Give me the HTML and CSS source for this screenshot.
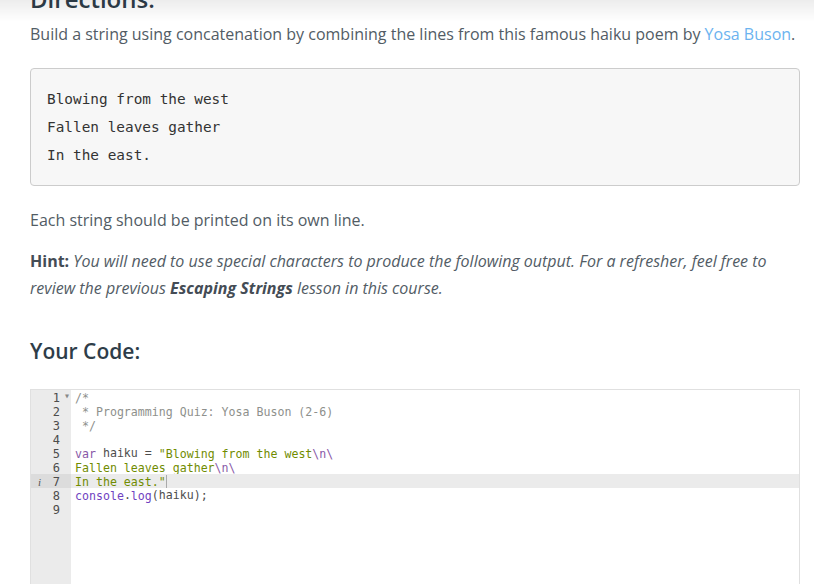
FILE: index.html
```html
<!DOCTYPE html>
<html>
<head>
<meta charset="utf-8">
<link rel="stylesheet" href="styles.css">
</head>
<body>
<div class="topshade"></div>
<main class="lesson">
  <h2 class="directions">Directions:</h2>
  <p class="para">Build a string using concatenation by combining the lines from this famous haiku poem by <a class="link" href="#">Yosa Buson</a>.</p>
  <pre class="poem">Blowing from the west
Fallen leaves gather
In the east.</pre>
  <p class="para each">Each string should be printed on its own line.</p>
  <p class="para hint"><strong>Hint:</strong> <em>You will need to use special characters to produce the following output. For a refresher, feel free to review the previous <strong>Escaping Strings</strong> lesson in this course.</em></p>
  <h3 class="yourcode">Your Code:</h3>
  <div class="editor">
    <div class="gutter">
      <div class="gl"><span class="num">1</span><span class="fold">▾</span></div>
      <div class="gl"><span class="num">2</span></div>
      <div class="gl"><span class="num">3</span></div>
      <div class="gl"><span class="num">4</span></div>
      <div class="gl"><span class="num">5</span></div>
      <div class="gl"><span class="num">6</span></div>
      <div class="gl active"><span class="info">i</span><span class="num">7</span></div>
      <div class="gl"><span class="num">8</span></div>
      <div class="gl"><span class="num">9</span></div>
    </div>
    <div class="code">
      <div class="cl"><span class="c">/*</span></div>
      <div class="cl"><span class="c"> * Programming Quiz: Yosa Buson (2-6)</span></div>
      <div class="cl"><span class="c"> */</span></div>
      <div class="cl"> </div>
      <div class="cl"><span class="k">var</span> haiku = <span class="s">"Blowing from the west</span><span class="e">\n\</span></div>
      <div class="cl"><span class="s">Fallen leaves gather</span><span class="e">\n\</span></div>
      <div class="cl active"><span class="s">In the east."</span><span class="cursor"></span></div>
      <div class="cl"><span class="f">console</span>.<span class="f">log</span>(haiku);</div>
      <div class="cl"> </div>
    </div>
  </div>
</main>
</body>
</html>
```

FILE: styles.css
```css
html, body {
  margin: 0;
  padding: 0;
  background: #ffffff;
}
body {
  font-family: "Open Sans", "Liberation Sans", sans-serif;
  color: #525c65;
  overflow: hidden;
}
.topshade {
  position: fixed;
  left: 0;
  top: 0;
  right: 0;
  height: 22px;
  background: linear-gradient(to bottom, rgba(0,0,0,0.07), rgba(0,0,0,0));
  pointer-events: none;
}
.lesson {
  margin: 0 14px 0 30px;
  padding-top: 0;
}
.directions {
  margin: -17px 0 0 0;
  font-size: 24px;
  line-height: 32px;
  font-weight: 600;
  color: #2e3d49;
}
.para {
  margin: 6px 0 0 0;
  font-size: 16px;
  line-height: 27px;
}
.link {
  color: #6bb3ef;
  text-decoration: none;
}
.poem {
  margin: 20px 0 0 0;
  padding: 16px 16px 16px 16px;
  background: #f7f7f7;
  border: 1px solid #cccccc;
  border-radius: 4px;
  font-family: "DejaVu Sans Mono", "Liberation Mono", monospace;
  font-size: 14.4px;
  line-height: 28px;
  color: #333333;
}
.each {
  margin-top: 21px;
}
.hint {
  margin-top: 14px;
}
.hint strong {
  font-weight: 700;
  color: #444c55;
}
.yourcode {
  margin: 33px 0 0 0;
  font-size: 21px;
  line-height: 32px;
  font-weight: 600;
  color: #2e3d49;
}
.editor {
  margin-top: 22px;
  display: flex;
  border: 1px solid #e0e0e0;
  border-bottom: none;
  height: 220px;
  font-family: "DejaVu Sans Mono", "Liberation Mono", monospace;
  font-size: 11.6px;
  line-height: 14px;
  color: #4d4d4c;
}
.gutter {
  width: 40px;
  flex: none;
  background: #ebebeb;
}
.gl {
  height: 14px;
  position: relative;
  display: flex;
  justify-content: flex-end;
  padding-right: 11px;
  color: #4d4d4c;
}
.gl .num {
  position: relative;
  top: 1px;
  font-size: 12px;
}
.gl.active {
  background: #dcdcdc;
}
.fold {
  position: absolute;
  right: 1px;
  top: -1px;
  font-size: 10px;
  color: #888;
}
.info {
  position: absolute;
  left: 7px;
  top: 1px;
  font-family: "Liberation Serif", serif;
  font-style: italic;
  font-size: 11px;
  color: #555;
}
.code {
  flex: 1;
  padding-left: 4px;
  background: #ffffff;
}
.cl {
  height: 14px;
  white-space: pre;
  margin-left: -4px;
  padding-left: 4px;
}
.cl > span, .cl {
  position: relative;
}
.cl > span {
  top: 1px;
}
.cl.active {
  background: #ebebeb;
}
.c { color: #8e908c; }
.k { color: #8959a8; }
.s { color: #718c00; }
.e { color: #8959a8; }
.f { color: #6f42c1; }
.cursor {
  display: inline-block;
  width: 1px;
  height: 13px;
  vertical-align: -2px;
  background: #aaaaaa;
}
```
